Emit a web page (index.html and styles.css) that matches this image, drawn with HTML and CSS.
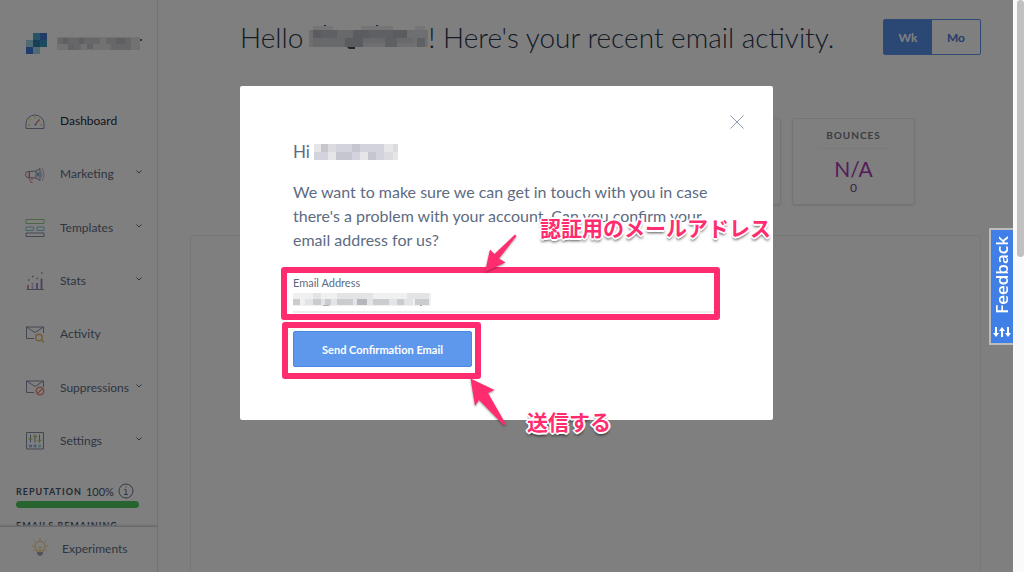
FILE: index.html
```html
<!DOCTYPE html>
<html lang="en">
<head>
<meta charset="utf-8">
<title>Dashboard</title>
<link rel="stylesheet" href="styles.css">
</head>
<body>
<div class="viewport">
  <div class="app">
    <aside class="sidebar">
      <div class="account">
        <svg class="logo" viewBox="0 0 21 21" aria-hidden="true">
          <path fill="#4aa8cc" d="M7 0h7v7H7z"/><path fill="#4478cc" d="M14 0h7v7h-7z"/>
          <path fill="#a0d4e2" d="M0 7h7v7H0zM7 14h7v7H7z"/><path fill="#2a80b0" d="M7 7h7v7H7z"/>
          <path fill="#3a94ba" d="M14 7h7v7h-7z"/><path fill="#4078dc" d="M0 14h7v7H0z"/>
        </svg>
        <svg class="mosaic-account" viewBox="0 0 86 14" aria-hidden="true">
          <path fill="#e4e4e6" d="M0 0h83v13H0z"/>
          <path fill="#cfcfd2" d="M1 1h42v6H1zM49 1h25v6H49zM11 7h13v6H11zM54 7h20v6H54z"/>
          <path fill="#bcbcc6" d="M6 1h5v6H6zM22 1h5v6h-5zM59 1h9v6h-9z"/>
          <path fill="#c6c6ca" d="M11 7h6v6h-6zM30 7h6v5h-6z"/>
          <path fill="#667" d="M83 2h2v2h-2z"/>
        </svg>
      </div>
      <nav class="nav" aria-label="Main">
        <a class="item current" href="#">
          <svg class="icon" viewBox="0 0 20 20"><path d="M1 17.500v-5a9 8.500 0 0 1 18 0v5z" class="slate"/><path d="M3.500 14h1.500M15.500 14H17M5 8.500l1 .8M10 6v1.500M14 8l.5-.6" stroke="#f5c800" stroke-width="1.400"/><path d="m11 12.500 3.500-4" stroke="#e85b50" stroke-width="1.400"/><circle cx="10.500" cy="13.500" r="1.100" fill="#2d6cdf"/></svg>
          <span>Dashboard</span></a>
        <a class="item" href="#">
          <svg class="icon" viewBox="0 0 20 20"><path d="M4.500 7.500 11 7l4-2.500v12L11 14l-6.500-.5zM4.500 7.500H3A2.500 3 0 0 0 3 13.500h1.500M11 7v7" class="slate"/><path d="M13 8.500v4" stroke="#2d6cdf" stroke-width="1.400"/><path d="M4 8v6l2 4.500h1.500M7 13.500V16" stroke="#e85b50"/><path d="M16 7.500q2 3 0 6M17 4q4 6.500 0 13" stroke="#c39ad8"/></svg>
          <span>Marketing</span><svg class="chevron" viewBox="0 0 6 4"><path d="m.5.5 2.500 2.500L5.500.5"/></svg></a>
        <a class="item" href="#">
          <svg class="icon" viewBox="0 0 20 20"><path d="M1 2.500h18v4H1z" stroke="#7fc06c"/><path d="M1 10h7.500v3.500H1zM12 10h7v3.500h-7z" stroke="#62b9cf"/><path d="M1 16h18v3.500H1z" class="slate"/></svg>
          <span>Templates</span><svg class="chevron" viewBox="0 0 6 4"><path d="m.5.5 2.500 2.500L5.500.5"/></svg></a>
        <a class="item" href="#">
          <svg class="icon" viewBox="0 0 20 20"><path d="M1.500 19.500h17.500" class="slate"/><path d="M3 19v-4" stroke="#e0526a" stroke-width="1.700"/><path d="M7.500 19v-6.500" stroke="#c8a8d8" stroke-width="1.700"/><path d="M12 19v-6" stroke="#6a58e0" stroke-width="1.700"/><path d="M16.500 19V8.500" stroke="#8d4fae" stroke-width="1.700"/><path d="M3 10h1.500M7 6.500h1.500M11.500 8.500H13M16 3h1.500" class="slate" stroke-width="1.600"/></svg>
          <span>Stats</span><svg class="chevron" viewBox="0 0 6 4"><path d="m.5.5 2.500 2.500L5.500.5"/></svg></a>
        <a class="item" href="#">
          <svg class="icon" viewBox="0 0 20 20"><path d="M9 14.500H1.500V3h17v6M1.500 3 10 8.500 18.500 3" class="slate"/><circle cx="14" cy="13.500" r="3.300" stroke="#e0a94e" stroke-width="1.500"/><path d="m16.500 16 2.500 2.500" stroke="#e0a94e" stroke-width="1.500"/></svg>
          <span>Activity</span></a>
        <a class="item" href="#">
          <svg class="icon" viewBox="0 0 20 20"><path d="M9 15.500H1.500V4h17v6M1.500 4 10 9.500 18.500 4" class="slate"/><circle cx="15" cy="14" r="3.800" stroke="#e87a60" stroke-width="1.500"/><path d="m12.500 16.500 5-5" stroke="#e87a60" stroke-width="1.500"/></svg>
          <span>Suppressions</span><svg class="chevron" viewBox="0 0 6 4"><path d="m.5.5 2.500 2.500L5.500.5"/></svg></a>
        <a class="item" href="#">
          <svg class="icon" viewBox="0 0 20 20"><path d="M1.500 2.500h17v16.500h-17z" class="slate"/><path d="M5.500 4.500v8M10 4.500v8M14.500 4.500v8" class="slate"/><path d="M3.500 9h4M8 6.500h4M12.500 10.500h4" stroke="#a8c640" stroke-width="1.500"/><circle cx="5.500" cy="16" r="1.100" stroke="#6a58e0"/><circle cx="10" cy="16" r="1.100" stroke="#3c88d8"/><circle cx="14.500" cy="16" r="1.100" stroke="#62b9cf"/></svg>
          <span>Settings</span><svg class="chevron" viewBox="0 0 6 4"><path d="m.5.5 2.500 2.500L5.500.5"/></svg></a>
      </nav>
      <section class="usage">
        <p class="usage-title"><b>REPUTATION</b> <span>100%</span>
          <svg class="info" viewBox="0 0 16 16" aria-hidden="true"><circle cx="8" cy="8" r="7"/><path d="M6.500 6.500H8v5M6 11.500h4M7.500 4h1"/></svg></p>
        <div class="meter"></div>
        <p class="usage-title"><b>EMAILS REMAINING</b></p>
      </section>
      <a class="experiments" href="#">
        <svg class="bulb" viewBox="0 0 18 20"><path d="M5.500 13c0-2-1.500-2.500-1.500-5a5 5 0 0 1 10 0c0 2.500-1.500 3-1.500 5z" stroke="#e8b54e"/><path d="M7 8.500 9 10l2-1.500M9 10v3" stroke="#e8c820"/><path d="M9 0v2M3 2.500l1.200 1.200M15 2.500l-1.200 1.200M.5 8h2M15.500 8h2M2.500 12.500l1.500-.8M15.500 12.500l-1.500-.8" stroke="#e8b54e"/><path fill="#8a95a8" d="M6 14h6v2l-2 2H8l-2-2z"/></svg>
        <span>Experiments</span></a>
    </aside>
    <main class="main">
      <header class="top">
        <h1>Hello
          <svg class="mosaic-name" viewBox="0 0 119 24" aria-label="hidden name"><path fill="#dedfe2" d="M0 5h119v17H0z"/><path fill="#eaebec" d="M4 1h20v4H4zM52 1h32v4H52zM106 1h10v4h-10z"/><path fill="#d0d2d6" d="M4 13h24v9H4zM28 5h16v17H28zM44 13h60v5H44z"/><path fill="#b4b8bf" d="M4 5h8v8H4zM44 5h16v8H44zM84 5h14v8H84zM36 13h18v9H36z"/><path fill="#bec1c7" d="M12 5h16v8H12zM60 5h24v8H60zM76 13h12v9H76zM108 13h8v9h-8z"/><path fill="#414c5c" d="M15 0h2v1h-2zM67 0h2v1h-2zM38 22h8v2h-6z"/></svg>! Here's your recent email activity.</h1>
        <div class="period"><button class="on" type="button">Wk</button><button type="button">Mo</button></div>
      </header>
      <section class="cards">
        <div class="card"></div><div class="card"></div><div class="card"></div><div class="card"></div>
        <div class="card"><h2>BOUNCES</h2><p class="rate">N/A</p><p class="count">0</p></div>
      </section>
      <section class="chart"></section>
    </main>
  </div>
  <div class="backdrop">
    <div class="modal" role="dialog" aria-modal="true" aria-labelledby="hi">
      <button class="close" type="button" aria-label="Close"><svg viewBox="0 0 15 15"><path d="m.5.500 14 14M14.500.5l-14 14"/></svg></button>
      <h2 id="hi">Hi
        <svg class="mosaic-hi" viewBox="0 0 84 16" aria-label="hidden name"><path fill="#dcdce0" d="M0 0h84v16H0z"/><path fill="#c6c6ce" d="M7 0h7v8H7zM38 0h8v8h-8zM22 8h16v8H22zM54 8h8v8h-8z"/><path fill="#d2d3dc" d="M22 0h16v8H22zM46 0h24v8H46zM38 8h8v8h-8zM62 8h8v8h-8zM0 8h14v8H0z"/><path fill="#e6e5e8" d="M0 0h7v8H0zM70 0h9v8h-9zM14 8h8v8h-8zM46 8h8v8h-8zM79 8h5v8h-5z"/></svg></h2>
      <p class="message">We want to make sure we can get in touch with you in case there's a problem with your account. Can you confirm your email address for us?</p>
      <form class="form">
        <div class="field marked">
          <label for="email">Email Address</label>
          <div class="entry">
            <input id="email" type="email">
            <svg class="mosaic-email" viewBox="0 0 138 16" aria-hidden="true"><path fill="#f0f0f1" d="M0 1h138v13H0z"/><path fill="#e3e4e6" d="M20 1h8v6h-8zM44 1h36v6H44zM114 1h22v6h-22zM12 7h108v6H12z"/><path fill="#cbccd0" d="M0 7h7v6H0zM20 7h8v6h-8zM32 7h6v6h-6zM44 7h16v6H44zM80 7h16v6H80zM104 7h7v6h-7zM122 7h14v6h-14z"/><path fill="#b4b6bb" d="M64 7h10v6H64z"/><path fill="#a8acb4" d="M30 13h6v1h-6zM127 13h2v1h-2z"/></svg>
          </div>
        </div>
        <div class="action marked"><button class="send" type="button">Send Confirmation Email</button></div>
      </form>
      <svg class="arrow arrow-email" viewBox="0 0 34 40" aria-hidden="true"><path d="m1 38 5-22.500 4.500 4.500L31 .5l1.500 1.500L15 24.500l6.500 4z"/></svg>
      <svg class="arrow arrow-send" viewBox="0 0 38 49" aria-hidden="true"><path d="m.5.500 24 11.500-6.500 3L36 46.500q-1 1.500-3 0L9 22l-4 6z"/></svg>
      <span class="note note-email" lang="ja">認証用のメールアドレス</span>
      <span class="note note-send" lang="ja">送信する</span>
    </div>
  </div>
  <button class="feedback" type="button"><span>Feedback</span>
    <svg viewBox="0 0 18 12" aria-hidden="true"><path d="M2 1h2v6h2l-3 4-3-4h2zM8 11h2V5h2L9 1 6 5h2zM14 1h2v6h2l-3 4-3-4h2z"/></svg></button>
</div>
<div class="scrollbar"><div class="thumb"></div></div>
</body>
</html>
```
FILE: styles.css
```css
* { box-sizing: border-box; }
body {
  margin: 0;
  height: 100vh;
  display: flex;
  overflow: hidden;
  font-family: Lato, sans-serif;
  font-size: 12px;
  color: #5d6b82;
  background: #fff;
}
h1, h2, p { margin: 0; font-weight: 400; }
a { color: inherit; text-decoration: none; }
button { font: inherit; cursor: pointer; }
svg { display: block; fill: none; flex: none; }
.slate { stroke: #66758f; }

.viewport { position: relative; flex: 1; min-width: 0; }
.app { display: flex; height: 100%; }

.sidebar {
  display: flex;
  flex-direction: column;
  width: 158px;
  height: 100%;
  overflow: hidden;
  border-right: 1px solid #e4e5e8;
}
.account { display: flex; align-items: center; gap: 10px; padding: 33px 0 0 26px; }
.logo { width: 21px; height: 21px; }
.mosaic-account { width: 86px; height: 14px; }
.nav { display: grid; flex: none; grid-auto-rows: 1fr; height: 373px; margin-top: 40px; }
.item { display: flex; align-items: center; padding: 0 15px 0 25px; }
.item.current { color: #1f2a3c; }
.item span { flex: 1; padding-left: 15px; }
.icon { width: 20px; height: 20px; stroke-width: 1; opacity: .8; }
.chevron { width: 6px; height: 4px; stroke: #5d6b82; margin-bottom: 3px; }
.usage { flex: 1; min-height: 0; overflow: hidden; padding: 16px 18px 0 16px; }
.usage-title { display: flex; align-items: center; gap: 4px; height: 16px; font-size: 9px; letter-spacing: 1px; color: #46536a; white-space: nowrap; }
.usage-title span { letter-spacing: 0; font-size: 11px; }
.info { width: 16px; height: 16px; stroke: #66758f; }
.meter { height: 7px; margin: 2px 0 9px; border-radius: 4px; background: #50c85f; }
.experiments {
  display: flex;
  flex: none;
  align-items: center;
  gap: 13px;
  height: 46px;
  padding: 0 0 3px 31px;
  border-top: 1px solid #d4d5d8;
  box-shadow: 0 -1px 2px #dcdcdf;
}
.bulb { width: 18px; height: 20px; opacity: .8; }

.main { display: flex; flex: 1; flex-direction: column; min-width: 0; padding: 19px 32px 0; }
.top { display: flex; align-items: center; justify-content: space-between; padding-left: 50px; }
h1 { display: flex; align-items: center; font-size: 28px; line-height: 34px; font-weight: 300; color: #29364b; white-space: nowrap; }
.mosaic-name { width: 119px; height: 24px; margin-left: 6px; }
.period { display: flex; border: 1px solid #5c92e8; border-radius: 2px; }
.period button { width: 48px; height: 34px; padding: 0; border: 0; background: none; color: #4a76d8; font-size: 12px; font-weight: 700; }
.period .on { background: #5690e8; color: #fff; }
.cards { display: flex; justify-content: center; gap: 11px; margin-top: 63px; }
.card { width: 123px; height: 87px; padding: 10px 0 0; border: 1px solid #e8e8ea; border-radius: 3px; box-shadow: 0 1px 2px #e4e4e6; text-align: center; }
.card h2 { margin: 0 24px; padding-bottom: 7px; border-bottom: 1px solid #f4f4f6; font-size: 10px; line-height: 12px; font-weight: 700; letter-spacing: 1px; color: #767a80; }
.rate { margin-top: 8px; font-size: 21px; line-height: 24px; color: #a83bb4; }
.count { font-size: 12px; line-height: 14px; color: #6a4a86; }
.chart { flex: 1; margin-top: 30px; border: 1px solid #eeeeef; border-bottom: 0; border-radius: 3px 3px 0 0; }

.backdrop {
  position: absolute;
  inset: 0;
  display: flex;
  align-items: flex-start;
  justify-content: center;
  padding-top: 86px;
  background: rgba(0, 0, 0, .5);
}
.modal { position: relative; width: 533px; padding: 54px 53px 53px; border-radius: 2px; background: #fff; }
.close { position: absolute; top: 24px; right: 24px; padding: 5px; border: 0; background: none; }
.close svg { width: 14px; height: 14px; stroke: #8492ab; }
.modal h2 { display: flex; align-items: center; gap: 4px; font-size: 17px; line-height: 24px; }
.mosaic-hi { width: 84px; height: 16px; }
.message { margin-top: 16px; font-size: 16px; line-height: 24px; }
.form { margin-top: 23px; }
.field label { display: block; font-size: 11px; line-height: 16px; }
.entry { position: relative; padding-right: 6px; }
.entry input { display: block; width: 100%; height: 22px; padding: 0; border: 0; border-bottom: 2px solid #eceded; background: none; outline: 0; }
.mosaic-email { position: absolute; left: 0; top: 1px; width: 138px; height: 16px; }
.marked { position: relative; }
.marked::after { content: ""; position: absolute; border: 6px solid #ff2d6f; border-radius: 3px; pointer-events: none; }
.field::after { inset: -8px 0 -7px -12px; }
.action { width: 179px; margin-top: 18px; }
.action::after { inset: -9px -9px -12px -11px; }
.send { display: block; width: 100%; height: 36px; padding: 0; border: 1px solid #4a88e4; border-radius: 2px; background: #5e98ec; color: #fff; font-size: 11px; font-weight: 700; }
.arrow { position: absolute; fill: #ff2d6f; filter: drop-shadow(0 1px 1px rgba(0, 0, 0, .4)); }
.arrow-email { left: 244px; top: 148px; width: 34px; height: 40px; }
.arrow-send { left: 230px; top: 292px; width: 38px; height: 49px; }
.note {
  position: absolute;
  font: 700 21px/24px "Noto Sans CJK JP", sans-serif;
  white-space: nowrap;
  color: #ff2d6f;
  text-shadow: 2px 0 #fff, -2px 0 #fff, 0 2px #fff, 0 -2px #fff, 1px 1px #fff, -1px 1px #fff, 1px -1px #fff, -1px -1px #fff, 0 3px 3px rgba(0, 0, 0, .7);
}
.note-email { left: 300px; top: 129px; }
.note-send { left: 287px; top: 323px; }

.feedback {
  position: absolute;
  top: 228px;
  right: 0;
  display: flex;
  flex-direction: column;
  align-items: center;
  padding: 6px 0 5px;
  width: 24px;
  border: 2px solid #bcbcbc;
  border-right: 0;
  background: #3f7fe6;
  color: #fff;
}
.feedback span { writing-mode: vertical-rl; transform: rotate(180deg); font: 600 17px/22px "Open Sans", sans-serif; }
.feedback svg { width: 18px; height: 12px; margin-top: 12px; fill: #fff; }
.scrollbar { width: 11px; padding-left: 4px; background: #fafafa; }
.thumb { height: 45vh; border-radius: 4px; background: #c1c1c1; }
```
